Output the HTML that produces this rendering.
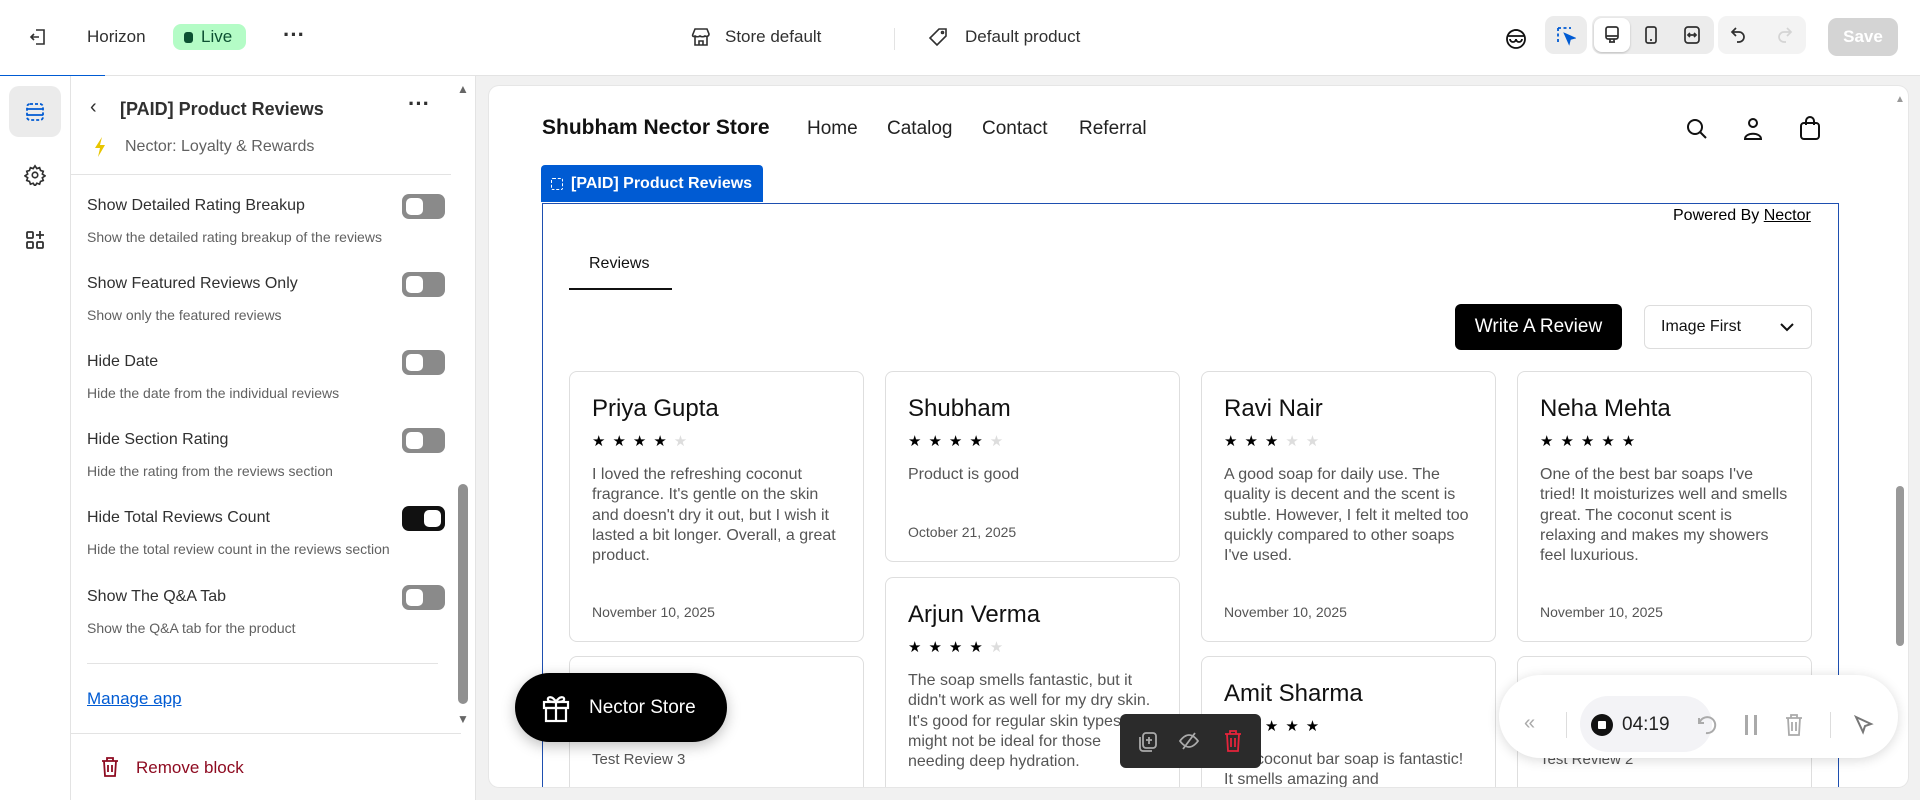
<!DOCTYPE html>
<html><head><meta charset="utf-8"><style>
*{box-sizing:border-box;margin:0;padding:0}
body{width:1920px;height:800px;overflow:hidden;background:#f1f1f1;font-family:"Liberation Sans",sans-serif;color:#303030;position:relative}
.abs{position:absolute}
.top{left:0;top:0;width:1920px;height:76px;background:#fff;border-bottom:1px solid #e3e3e3}
.t{font-size:17px;color:#303030;white-space:nowrap}
.rail{left:0;top:76px;width:71px;height:724px;background:#fff;border-right:1px solid #e3e3e3}
.side{left:71px;top:76px;width:405px;height:724px;background:#fff;border-right:1px solid #e3e3e3;overflow:hidden}
.ttl{font-size:16px;color:#303030}
.dsc{font-size:14px;color:#616161;white-space:nowrap}
.tog{position:absolute;left:402px;width:43px;height:25px;border-radius:7px;background:#8a8a8a}
.tog i{position:absolute;left:4px;top:4px;width:17px;height:17px;border-radius:5px;background:#fff}
.frame{left:489px;top:86px;width:1419px;height:701px;background:#fff;border-radius:10px;overflow:hidden;box-shadow:0 0 0 1px #e6e6e6}
.card{position:absolute;width:295px;border:1px solid #dedede;border-radius:8px;background:#fff;padding:0 22px;overflow:hidden}
.card .n{position:absolute;left:22px;top:23px;font-size:24px;color:#111}
.card .s{position:absolute;left:22px;top:60px;font-size:15px;letter-spacing:7px;color:#000}
.card .s b{color:#ddd;font-weight:normal}
.card .b{position:absolute;left:22px;right:22px;top:93px;font-size:16px;line-height:20.3px;color:#555}
.card .d{position:absolute;left:22px;font-size:14px;color:#555}
</style></head><body>
<div class="abs top">
 <svg class="abs" style="left:28px;top:27px" width="20" height="20" viewBox="0 0 20 20" fill="none" stroke="#303030" stroke-width="1.6"><path d="M8 3h8v14H8M11 10H3M6 7l-3 3 3 3"/></svg>
 <div class="abs t" style="left:87px;top:27px">Horizon</div>
 <div class="abs" style="left:173px;top:24px;width:73px;height:26px;border-radius:8px;background:#b4fcc6"></div>
 <div class="abs" style="left:184px;top:32px;width:9px;height:11px;border-radius:3px;background:#0c5132"></div>
 <div class="abs t" style="left:201px;top:27px;color:#0c5132">Live</div>
 <div class="abs t" style="left:283px;top:22px;font-size:22px;font-weight:bold">···</div>
 <svg class="abs" style="left:690px;top:26px" width="22" height="22" viewBox="0 0 22 22" fill="none" stroke="#303030" stroke-width="1.6"><path d="M3 8l2-5h12l2 5c0 2-2 3-4 2-1 1-4 1-5 0-1 1-4 1-5 0-2 1-3 0-2-2zM5 11v8h12v-8M9 19v-4h4v4"/></svg>
 <div class="abs t" style="left:725px;top:27px">Store default</div>
 <div class="abs" style="left:894px;top:28px;width:1px;height:22px;background:#e3e3e3"></div>
 <svg class="abs" style="left:928px;top:27px" width="20" height="20" viewBox="0 0 20 20" fill="none" stroke="#303030" stroke-width="1.6"><path d="M11 2h7v7l-9 9-7-7z"/><circle cx="14.5" cy="5.5" r="1"/></svg>
 <div class="abs t" style="left:965px;top:27px">Default product</div>
 <svg class="abs" style="left:1505px;top:26px" width="22" height="24" viewBox="0 0 22 24" fill="none" stroke="#111" stroke-width="1.8"><circle cx="11" cy="13" r="9"/><path d="M3 10h16M5 13a3 3 0 006 0 3 3 0 006 0M4 7q7-6 14 0"/></svg>
 <div class="abs" style="left:1545px;top:16px;width:42px;height:38px;border-radius:9px;background:#ececec"></div>
 <svg class="abs" style="left:1556px;top:26px" width="20" height="20" viewBox="0 0 20 20" fill="none" stroke="#005bd3" stroke-width="1.8" stroke-dasharray="3 2.5"><path d="M2 2h13M2 2v14"/><path d="M9 8l9 4-4 1-1 4z" fill="#005bd3" stroke-dasharray="0"/></svg>
 <div class="abs" style="left:1592px;top:16px;width:122px;height:38px;border-radius:9px;background:#ececec"></div>
 <div class="abs" style="left:1594px;top:18px;width:36px;height:34px;border-radius:8px;background:#fff;box-shadow:0 1px 2px rgba(0,0,0,.2)"></div>
 <svg class="abs" style="left:1602px;top:25px" width="20" height="20" viewBox="0 0 20 20" fill="none" stroke="#303030" stroke-width="1.7"><rect x="4" y="2" width="12" height="12" rx="2"/><path d="M4 11h12M8 14v3h4v-3M7 17h6"/></svg>
 <svg class="abs" style="left:1641px;top:25px" width="20" height="20" viewBox="0 0 20 20" fill="none" stroke="#303030" stroke-width="1.7"><rect x="5" y="2" width="10" height="16" rx="2"/><path d="M9 15h2"/></svg>
 <svg class="abs" style="left:1682px;top:25px" width="20" height="20" viewBox="0 0 20 20" fill="none" stroke="#303030" stroke-width="1.7"><rect x="3" y="2" width="14" height="16" rx="3"/><path d="M6 10h8M8 8l-2 2 2 2M12 8l2 2-2 2"/></svg>
 <div class="abs" style="left:1718px;top:16px;width:88px;height:38px;border-radius:9px;background:#f3f3f3"></div>
 <svg class="abs" style="left:1729px;top:25px" width="20" height="20" viewBox="0 0 20 20" fill="none" stroke="#303030" stroke-width="1.7"><path d="M7 3L3 7l4 4M3 7h7a5 5 0 010 10H8"/></svg>
 <svg class="abs" style="left:1774px;top:25px" width="20" height="20" viewBox="0 0 20 20" fill="none" stroke="#d4d4d4" stroke-width="1.7"><path d="M13 3l4 4-4 4M17 7h-7a5 5 0 000 10h2"/></svg>
 <div class="abs" style="left:1828px;top:18px;width:70px;height:38px;border-radius:9px;background:#d4d4d4;color:#fff;font-size:17px;font-weight:bold;text-align:center;line-height:38px">Save</div>
</div>
<div class="abs" style="left:0;top:75px;width:105px;height:3px;background:#005bd3"></div>
<div class="abs rail">
 <div class="abs" style="left:9px;top:10px;width:52px;height:51px;border-radius:10px;background:#ebebeb"></div>
 <svg class="abs" style="left:24px;top:25px" width="22" height="22" viewBox="0 0 22 22" fill="none" stroke="#005bd3" stroke-width="1.8"><path d="M3 8h16M3 14h16" /><rect x="3" y="3" width="16" height="16" rx="3" stroke-dasharray="3 2"/></svg>
 <svg class="abs" style="left:24px;top:88px" width="22" height="22" viewBox="0 0 24 24" fill="none" stroke="#303030" stroke-width="1.8"><circle cx="12" cy="12" r="3"/><path d="M12 2l2 3 3-1 1 3 3 1-1 3 3 2-3 2 1 3-3 1-1 3-3-1-2 3-2-3-3 1-1-3-3-1 1-3-3-2 3-2-1-3 3-1 1-3 3 1z"/></svg>
 <svg class="abs" style="left:24px;top:153px" width="22" height="22" viewBox="0 0 22 22" fill="none" stroke="#303030" stroke-width="1.8"><rect x="3" y="3" width="6" height="6" rx="1"/><rect x="3" y="13" width="6" height="6" rx="1"/><rect x="13" y="13" width="6" height="6" rx="1"/><path d="M16 2v8M12 6h8"/></svg>
</div>
<div class="abs side">
 <div class="abs" style="left:19px;top:20px;font-size:20px">‹</div>
 <div class="abs" style="left:49px;top:23px;font-size:18px;font-weight:bold;color:#303030">[PAID] Product Reviews</div>
 <div class="abs" style="left:337px;top:15px;font-size:22px;font-weight:bold">···</div>
 <svg class="abs" style="left:22px;top:60px" width="14" height="22" viewBox="0 0 14 22"><path d="M9 1L2 12h5l-2 9 7-12H7z" fill="#e8c500"/></svg>
 <div class="abs" style="left:54px;top:62px;font-size:16px;color:#616161">Nector: Loyalty &amp; Rewards</div>
 <div class="abs" style="left:0;top:98px;width:380px;height:1px;background:#e3e3e3"></div>
 <div class="abs ttl" style="left:16px;top:121px">Show Detailed Rating Breakup</div><div class="abs dsc" style="left:16px;top:153px">Show the detailed rating breakup of the reviews</div><div class="tog" style="top:118px;left:331px"><i></i></div>
 <div class="abs ttl" style="left:16px;top:199px">Show Featured Reviews Only</div><div class="abs dsc" style="left:16px;top:231px">Show only the featured reviews</div><div class="tog" style="top:196px;left:331px"><i></i></div>
 <div class="abs ttl" style="left:16px;top:277px">Hide Date</div><div class="abs dsc" style="left:16px;top:309px">Hide the date from the individual reviews</div><div class="tog" style="top:274px;left:331px"><i></i></div>
 <div class="abs ttl" style="left:16px;top:355px">Hide Section Rating</div><div class="abs dsc" style="left:16px;top:387px">Hide the rating from the reviews section</div><div class="tog" style="top:352px;left:331px"><i></i></div>
 <div class="abs ttl" style="left:16px;top:433px">Hide Total Reviews Count</div><div class="abs dsc" style="left:16px;top:465px">Hide the total review count in the reviews section</div><div class="tog" style="top:430px;left:331px;background:#111"><i style="left:22px"></i></div>
 <div class="abs ttl" style="left:16px;top:512px">Show The Q&amp;A Tab</div><div class="abs dsc" style="left:16px;top:544px">Show the Q&amp;A tab for the product</div><div class="tog" style="top:509px;left:331px"><i></i></div>
 <div class="abs" style="left:16px;top:587px;width:351px;height:1px;background:#e3e3e3"></div>
 <div class="abs" style="left:16px;top:613px;font-size:17px;color:#005bd3;text-decoration:underline">Manage app</div>
 <div class="abs" style="left:0;top:657px;width:390px;height:1px;background:#e3e3e3"></div>
 <svg class="abs" style="left:29px;top:680px" width="20" height="22" viewBox="0 0 20 22" fill="none" stroke="#8e0b21" stroke-width="1.8"><path d="M2 5h16M7 5V2h6v3M4 5l1 15h10l1-15M8 9v7M12 9v7"/></svg>
 <div class="abs" style="left:65px;top:682px;font-size:17px;color:#8e0b21">Remove block</div>
 <div class="abs" style="left:386px;top:6px;font-size:12px;color:#666">▲</div>
 <div class="abs" style="left:387px;top:408px;width:10px;height:220px;border-radius:5px;background:#909090"></div>
 <div class="abs" style="left:386px;top:636px;font-size:12px;color:#666">▼</div>
</div>
<div class="abs frame">
 <div class="abs" style="left:53px;top:30px;font-size:21px;font-weight:bold;color:#111">Shubham Nector Store</div>
 <div class="abs" style="left:318px;top:32px;font-size:19px;color:#222">Home</div>
 <div class="abs" style="left:398px;top:32px;font-size:19px;color:#222">Catalog</div>
 <div class="abs" style="left:493px;top:32px;font-size:19px;color:#222">Contact</div>
 <div class="abs" style="left:590px;top:32px;font-size:19px;color:#222">Referral</div>
 <svg class="abs" style="left:1196px;top:31px" width="24" height="24" viewBox="0 0 24 24" fill="none" stroke="#111" stroke-width="2"><circle cx="10" cy="10" r="7"/><path d="M15 15l6 6"/></svg>
 <svg class="abs" style="left:1252px;top:30px" width="24" height="26" viewBox="0 0 24 26" fill="none" stroke="#111" stroke-width="2"><circle cx="12" cy="7" r="4"/><path d="M4 23c0-7 16-7 16 0z"/></svg>
 <svg class="abs" style="left:1309px;top:29px" width="24" height="26" viewBox="0 0 24 26" fill="none" stroke="#111" stroke-width="2"><rect x="3" y="8" width="18" height="16" rx="3"/><path d="M8 10V6a4 4 0 018 0v4"/></svg>
 <div class="abs" style="left:52px;top:79px;width:222px;height:37px;background:#005bd3;border-radius:4px 4px 0 0;color:#fff;font-size:16px;font-weight:bold;line-height:37px;padding-left:30px">[PAID] Product Reviews</div>
 <div class="abs" style="left:62px;top:92px;width:12px;height:12px;border:1.5px dashed #fff;border-radius:2px"></div>
 <div class="abs" style="left:53px;top:117px;width:1297px;height:600px;border:1.5px solid #1e4fb0;border-bottom:none"></div>
 <div class="abs" style="left:1184px;top:121px;font-size:16px;color:#000">Powered By <u>Nector</u></div>
 <div class="abs" style="left:100px;top:169px;font-size:16px;color:#111">Reviews</div>
 <div class="abs" style="left:80px;top:202px;width:103px;height:2px;background:#111"></div>
 <div class="abs" style="left:966px;top:218px;width:167px;height:46px;border-radius:6px;background:#000;color:#fff;font-size:19px;text-align:center;line-height:46px">Write A Review</div>
 <div class="abs" style="left:1155px;top:219px;width:168px;height:44px;border-radius:6px;border:1px solid #ddd;font-size:16px;line-height:42px;padding-left:16px;color:#111">Image First</div>
 <svg class="abs" style="left:1290px;top:235px" width="16" height="12" viewBox="0 0 16 12" fill="none" stroke="#111" stroke-width="2"><path d="M2 3l6 6 6-6"/></svg>

 <div class="card" style="left:80px;top:285px;height:271px"><div class="n">Priya Gupta</div><div class="s">★★★★<b>★</b></div><div class="b">I loved the refreshing coconut fragrance. It's gentle on the skin and doesn't dry it out, but I wish it lasted a bit longer. Overall, a great product.</div><div class="d" style="top:232px">November 10, 2025</div></div>
 <div class="card" style="left:80px;top:570px;height:200px"><div class="d" style="top:94px;font-size:15px">Test Review 3</div></div>
 <div class="card" style="left:396px;top:285px;height:191px"><div class="n">Shubham</div><div class="s">★★★★<b>★</b></div><div class="b">Product is good</div><div class="d" style="top:152px">October 21, 2025</div></div>
 <div class="card" style="left:396px;top:491px;height:250px"><div class="n">Arjun Verma</div><div class="s">★★★★<b>★</b></div><div class="b">The soap smells fantastic, but it didn't work as well for my dry skin. It's good for regular skin types but might not be ideal for those needing deep hydration.</div></div>
 <div class="card" style="left:712px;top:285px;height:271px"><div class="n">Ravi Nair</div><div class="s">★★★<b>★★</b></div><div class="b">A good soap for daily use. The quality is decent and the scent is subtle. However, I felt it melted too quickly compared to other soaps I've used.</div><div class="d" style="top:232px">November 10, 2025</div></div>
 <div class="card" style="left:712px;top:570px;height:200px"><div class="n">Amit Sharma</div><div class="s">★★★★★</div><div class="b">The coconut bar soap is fantastic! It smells amazing and</div></div>
 <div class="card" style="left:1028px;top:285px;height:271px"><div class="n">Neha Mehta</div><div class="s">★★★★★</div><div class="b">One of the best bar soaps I've tried! It moisturizes well and smells great. The coconut scent is relaxing and makes my showers feel luxurious.</div><div class="d" style="top:232px">November 10, 2025</div></div>
 <div class="card" style="left:1028px;top:570px;height:200px"><div class="n">Test 2</div><div class="d" style="top:94px;font-size:15px">Test Review 2</div></div>
 <div class="abs" style="left:1406px;top:8px;font-size:10px;color:#999">▲</div>
 <div class="abs" style="left:1407px;top:400px;width:8px;height:160px;border-radius:4px;background:#999"></div>
</div>
<div class="abs" style="left:515px;top:673px;width:212px;height:69px;border-radius:35px;background:#000;box-shadow:0 4px 14px rgba(0,0,0,.25)"></div>
<svg class="abs" style="left:540px;top:692px" width="32" height="32" viewBox="0 0 32 32" fill="none" stroke="#fff" stroke-width="2.2"><rect x="4" y="10" width="24" height="6"/><rect x="6" y="16" width="20" height="13"/><path d="M16 10v19M16 10c-3-6-9-6-8-2 1 2 5 2 8 2 3 0 7 0 8-2 1-4-5-4-8 2"/></svg>
<div class="abs" style="left:589px;top:697px;font-size:19px;color:#fff">Nector Store</div>
<div class="abs" style="left:1120px;top:714px;width:141px;height:54px;border-radius:6px;background:#2b2b2b"></div>
<svg class="abs" style="left:1137px;top:730px" width="22" height="22" viewBox="0 0 22 22" fill="none" stroke="#aaa" stroke-width="1.8"><rect x="6" y="3" width="13" height="15" rx="3"/><path d="M3 7v11a3 3 0 003 3h9M12 7v7M9 10h6"/></svg>
<svg class="abs" style="left:1178px;top:730px" width="22" height="22" viewBox="0 0 22 22" fill="none" stroke="#aaa" stroke-width="1.8"><path d="M2 11s4-6 9-6 9 6 9 6-4 6-9 6-9-6-9-6zM5 19L17 3"/></svg>
<svg class="abs" style="left:1223px;top:729px" width="20" height="24" viewBox="0 0 20 24" fill="none" stroke="#e5243b" stroke-width="1.8"><path d="M2 5h16M7 5V2h6v3M4 5l1 17h10l1-17M8 9v9M12 9v9"/></svg>
<div class="abs" style="left:1499px;top:675px;width:399px;height:83px;border-radius:42px;background:#fff;box-shadow:0 2px 12px rgba(0,0,0,.15)"></div>
<div class="abs" style="left:1580px;top:696px;width:132px;height:56px;border-radius:28px;background:#f3f3f6"></div>
<div class="abs" style="left:1524px;top:712px;font-size:20px;color:#aaa">«</div>
<div class="abs" style="left:1566px;top:712px;width:1px;height:26px;background:#ddd"></div>
<div class="abs" style="left:1591px;top:714px;width:22px;height:22px;border-radius:50%;background:#111"></div>
<div class="abs" style="left:1598px;top:721px;width:8px;height:8px;border-radius:1px;background:#fff"></div>
<div class="abs" style="left:1622px;top:714px;font-size:19px;color:#222">04:19</div>
<svg class="abs" style="left:1694px;top:713px" width="24" height="24" viewBox="0 0 24 24" fill="none" stroke="#aaa" stroke-width="2"><path d="M5 5v5h5M5.5 10A8 8 0 1112 20"/></svg>
<div class="abs" style="left:1745px;top:715px;width:3px;height:20px;background:#aaa"></div><div class="abs" style="left:1754px;top:715px;width:3px;height:20px;background:#aaa"></div>
<svg class="abs" style="left:1784px;top:713px" width="20" height="24" viewBox="0 0 20 24" fill="none" stroke="#aaa" stroke-width="1.8"><path d="M2 5h16M7 5V2h6v3M4 5l1 17h10l1-17M8 9v9M12 9v9"/></svg>
<div class="abs" style="left:1830px;top:712px;width:1px;height:26px;background:#ddd"></div>
<svg class="abs" style="left:1852px;top:714px" width="22" height="22" viewBox="0 0 22 22" fill="none" stroke="#777" stroke-width="2"><path d="M4 3l15 7-6 2-2 6z"/></svg>
</body></html>
